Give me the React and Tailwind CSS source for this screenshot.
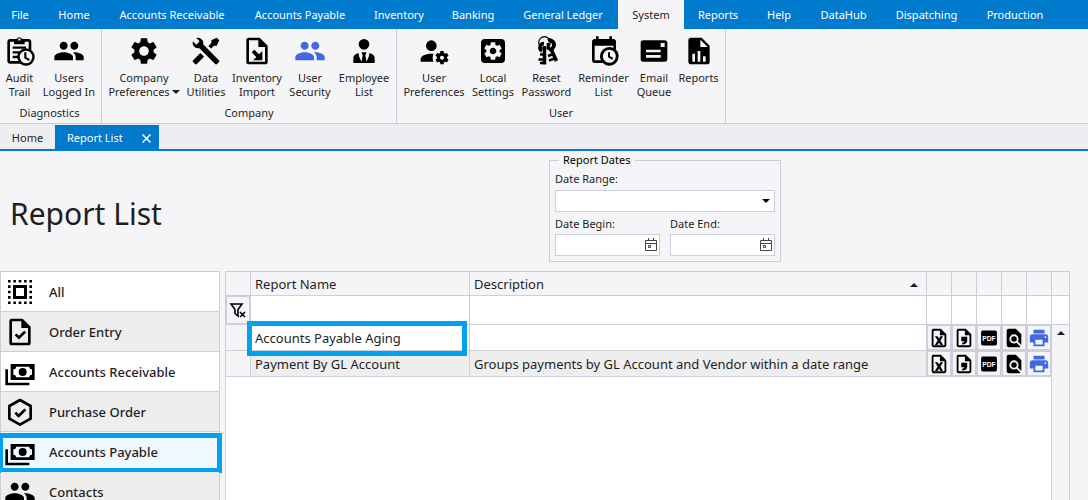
import { useState } from 'react'
import { MdGroup, MdSettings } from 'react-icons/md'

// 24x24 glyph made of one filled path
function Glyph({ d, className = 'size-8' }) {
  return (
    <svg viewBox="0 0 24 24" className={className} fill="currentColor" fillRule="evenodd" aria-hidden="true">
      <path d={d} />
    </svg>
  )
}

const paths = {
  tools: 'M21.71 20.29L20.29 21.71A1 1 0 0 1 18.88 21.71L7 9.85A3.81 3.81 0 0 1 6 10A4 4 0 0 1 2.22 4.7L4.76 7.24L5.29 6.71L6.71 5.29L7.24 4.76L4.7 2.22A4 4 0 0 1 10 6A3.81 3.81 0 0 1 9.85 7L21.71 18.88A1 1 0 0 1 21.71 20.29M2.29 18.88A1 1 0 0 0 2.29 20.29L3.71 21.71A1 1 0 0 0 5.12 21.71L10.59 16.25L7.76 13.42M20 2L16 4V6L13.83 8.17L15.83 10.17L18 8H20L22 4Z',
  tie: 'M12 3A4 4 0 0 1 16 7A4 4 0 0 1 12 11A4 4 0 0 1 8 7A4 4 0 0 1 12 3M16 13.54C16 14.6 15.72 17.07 13.81 19.83L13 15L13.94 13.12C13.32 13.05 12.67 13 12 13S10.68 13.05 10.06 13.12L11 15L10.19 19.83C8.28 17.07 8 14.6 8 13.54C5.61 14.24 4 15.5 4 17V21H20V17C20 15.5 18.4 14.24 16 13.54Z',
  userCog: 'M10 4A4 4 0 0 0 6 8A4 4 0 0 0 10 12A4 4 0 0 0 14 8A4 4 0 0 0 10 4M17 12C16.87 12 16.76 12.09 16.74 12.21L16.55 13.53C16.25 13.66 15.96 13.82 15.7 14L14.46 13.5C14.35 13.5 14.22 13.5 14.15 13.63L13.15 15.36C13.09 15.47 13.11 15.6 13.21 15.68L14.27 16.5C14.25 16.67 14.24 16.83 14.24 17C14.24 17.17 14.25 17.33 14.27 17.5L13.21 18.32C13.12 18.4 13.09 18.53 13.15 18.64L14.15 20.37C14.21 20.5 14.34 20.5 14.46 20.5L15.7 20C15.96 20.18 16.24 20.35 16.55 20.47L16.74 21.79C16.76 21.91 16.86 22 17 22H19C19.11 22 19.22 21.91 19.24 21.79L19.43 20.47C19.73 20.34 20 20.18 20.27 20L21.5 20.5C21.63 20.5 21.76 20.5 21.83 20.37L22.83 18.64C22.89 18.53 22.86 18.4 22.77 18.32L21.7 17.5C21.72 17.33 21.74 17.17 21.74 17C21.74 16.83 21.73 16.67 21.7 16.5L22.76 15.68C22.85 15.6 22.88 15.47 22.82 15.36L21.82 13.63C21.76 13.5 21.63 13.5 21.5 13.5L20.27 14C20 13.82 19.73 13.65 19.42 13.53L19.23 12.21C19.22 12.09 19.11 12 19 12H17M10 14C5.58 14 2 15.79 2 18V20H11.68A7 7 0 0 1 11 17A7 7 0 0 1 11.64 14.09C11.11 14.03 10.56 14 10 14M18 15.5C18.83 15.5 19.5 16.17 19.5 17C19.5 17.83 18.83 18.5 18 18.5C17.16 18.5 16.5 17.83 16.5 17C16.5 16.17 17.17 15.5 18 15.5Z',
  calendarClock: 'M15 13H16.5V15.82L18.94 17.23L18.19 18.53L15 16.69V13M19 8H5V19H9.67C9.24 18.09 9 17.07 9 16A7 7 0 0 1 16 9C17.07 9 18.09 9.24 19 9.67V8M5 21C3.89 21 3 20.1 3 19V5C3 3.89 3.89 3 5 3H6V1H8V3H16V1H18V3H19A2 2 0 0 1 21 5V11.1C22.24 12.36 23 14.09 23 16A7 7 0 0 1 16 23C14.09 23 12.36 22.24 11.1 21H5M16 11.15A4.85 4.85 0 0 0 11.15 16C11.15 18.68 13.32 20.85 16 20.85A4.85 4.85 0 0 0 20.85 16C20.85 13.32 18.68 11.15 16 11.15Z',
  emailQueue: 'M4 4H20A2 2 0 0 1 22 6V18A2 2 0 0 1 20 20H4A2 2 0 0 1 2 18V6A2 2 0 0 1 4 4M17 6V9H20V6H17M6 11V13H17V11H6M6 15V17H17V15H6Z',
  fileChart: 'M13 9H18.5L13 3.5V9M6 2H14L20 8V20A2 2 0 0 1 18 22H6C4.89 22 4 21.1 4 20V4C4 2.89 4.89 2 6 2M7 20H9V14H7V20M11 20H13V12H11V20M15 20H17V16H15V20Z',
  fileImport: 'M6 2H14L20 8V20A2 2 0 0 1 18 22H6A2 2 0 0 1 4 20V4A2 2 0 0 1 6 2M6 4V20H18V9H13V4H6M8 13L10 11L13.5 14.5L16 12V19H9L11.5 16.5L8 13Z',
  cash: 'M5 6H23V18H5V6M14 9A3 3 0 0 1 17 12A3 3 0 0 1 14 15A3 3 0 0 1 11 12A3 3 0 0 1 14 9M9 8A2 2 0 0 1 7 10V14A2 2 0 0 1 9 16H19A2 2 0 0 1 21 14V10A2 2 0 0 1 19 8H9M1 10H3V20H19V22H1V10Z',
  fileCheck: 'M6 2H14L20 8V20A2 2 0 0 1 18 22H6A2 2 0 0 1 4 20V4A2 2 0 0 1 6 2M6 4V20H18V9H13V4H6M8 14.5L9.4 13.1L11.2 14.9L15.2 11L16.6 12.4L11.2 17.7Z',
  fileExcel: 'M6 2H14L20 8V20A2 2 0 0 1 18 22H6A2 2 0 0 1 4 20V4A2 2 0 0 1 6 2M6 4V20H18V9H13V4H6M7.5 10H10.5L12 12.6L13.5 10H16.5L13.5 14.8L16.5 19.5H13.5L12 17L10.5 19.5H7.5L10.5 14.8Z',
  fileComma: 'M6 2H14L20 8V20A2 2 0 0 1 18 22H6A2 2 0 0 1 4 20V4A2 2 0 0 1 6 2M6 4V20H18V9H13V4H6M9 10.500H15.500V15C15.500 17.500 13.500 19.200 10 19.200V17.200C11.500 17 12.200 16.500 12.400 15.500H9Z',
  fileSearch: 'M14 2H6A2 2 0 0 0 4 4V20A2 2 0 0 0 6 22H18C18.4 22 18.8 21.9 19.1 21.6L14.8 17.3C14 17.8 13.1 18 12 18A5 5 0 1 1 17 13C17 14 16.7 15 16.2 15.8L20 19.6V8M12 10A3 3 0 1 0 12 16A3 3 0 0 0 12 10Z',
  printer: 'M18 3H6V7H18M19 12A1 1 0 0 1 18 11A1 1 0 0 1 19 10A1 1 0 0 1 20 11A1 1 0 0 1 19 12M16 19H8V14H16M19 8H5A3 3 0 0 0 2 11V17H6V21H18V17H22V11A3 3 0 0 0 19 8Z',
}

function AuditIcon() {
  return (
    <svg viewBox="0 0 24 24" className="size-8" fill="none" stroke="currentColor" strokeWidth="2" aria-hidden="true">
      <rect x="3.5" y="4" width="16" height="16.5" rx="1.2" />
      <path d="M7.5 3h2a2.200 2.200 0 0 1 4 0h2v4h-8z" fill="currentColor" stroke="none" />
      <circle cx="11.500" cy="3.300" r=".9" fill="#f5f5f7" stroke="none" />
      <path d="M6.500 9.500h10M6.500 13h5M6.500 16.500h4" strokeWidth="1.700" />
      <circle cx="16.500" cy="16.500" r="5.600" fill="#f5f5f7" strokeWidth="1.800" />
      <path d="M16 13v4l3 1.800" strokeWidth="1.600" />
    </svg>
  )
}

function AppCogIcon() {
  return (
    <span className="flex size-8 items-center justify-center">
      <span className="flex size-6 items-center justify-center rounded-sm bg-black text-[#f5f5f7]">
        <MdSettings className="size-[22px]" />
      </span>
    </span>
  )
}

function KeysIcon() {
  return (
    <svg viewBox="0 0 32 32" className="size-8" fill="none" stroke="currentColor" aria-hidden="true">
      <circle cx="13.500" cy="7.500" r="5.800" strokeWidth="1.200" />
      <path d="M13 8.500a4 4 0 0 0-2 7.500" strokeWidth="3.500" />
      <path d="M13.500 11v18.500" strokeWidth="3.500" />
      <path d="M7.500 24.500h5M9 28h3M9 19.500h3" strokeWidth="2.500" />
      <path d="M17 5.500a4.500 4.500 0 0 1 3 8.500" strokeWidth="4" />
      <path d="M17 8l.5 5.500 3 2" strokeWidth="3" />
      <path d="M20 14l5.500 12" strokeWidth="3.500" />
      <path d="M18 25.500l5.500-2M17 21l4-1.500" strokeWidth="2.500" />
    </svg>
  )
}

function SelectAllIcon() {
  return (
    <svg viewBox="0 0 32 32" className="size-8" fill="none" stroke="currentColor" aria-hidden="true">
      <path d="M4 5.300h24M4 26.700h24M5.300 4v24M26.700 4v24" strokeWidth="2.600" strokeDasharray="2.600 2.750" />
      <rect x="10.500" y="10.500" width="11" height="11" strokeWidth="3" />
    </svg>
  )
}

function HexCheckIcon() {
  return (
    <svg viewBox="0 0 24 24" className="size-8" fill="none" stroke="currentColor" strokeWidth="2" strokeLinejoin="round" aria-hidden="true">
      <path d="M12 3l8 4.500v9.500L12 21.500 4 17V7.500z" />
      <path d="M8.500 12.500l2.500 2.500 5-5" />
    </svg>
  )
}

function PdfIcon() {
  return (
    <svg viewBox="0 0 24 24" className="size-5" aria-hidden="true">
      <rect x="2.500" y="3" width="19" height="18" rx="2" />
      <text x="12" y="15" textAnchor="middle" fontSize="8" fontWeight="700" fill="#fff" fontFamily="Liberation Sans, sans-serif">PDF</text>
    </svg>
  )
}

function FilterIcon() {
  return (
    <svg viewBox="0 0 20 20" className="size-5" fill="none" stroke="currentColor" strokeWidth="1.600" aria-hidden="true">
      <path d="M3 4h11L10 9.500V16L7 13.500v-4z" />
      <path d="M12 12l5 5M17 12l-5 5" />
    </svg>
  )
}

function CalendarIcon() {
  return (
    <svg viewBox="0 0 14 14" className="size-3.5" fill="none" stroke="#444" strokeWidth="1" aria-hidden="true">
      <path d="M1.500 2.500h11v10h-11zM1.500 5.500h11M4.500 0v3M9.500 0v3M4.500 7.500h2v2h-2z" />
    </svg>
  )
}

function Caret({ up }) {
  return (
    <svg viewBox="0 0 8 4" className="h-1 w-2 shrink-0" fill="currentColor" aria-hidden="true">
      <path d={up ? 'M0 4L4 0L8 4Z' : 'M0 0L4 4L8 0Z'} />
    </svg>
  )
}

const menu = [
  { label: 'File', width: 'w-11 pr-1' },
  { label: 'Home', width: 'w-[60px]' },
  { label: 'Accounts Receivable', width: 'w-[136px]' },
  { label: 'Accounts Payable', width: 'w-[120px]' },
  { label: 'Inventory', width: 'w-[78px]' },
  { label: 'Banking', width: 'w-[70px]' },
  { label: 'General Ledger', width: 'w-[110px]' },
  { label: 'System', width: 'w-[66px]' },
  { label: 'Reports', width: 'w-[68px]' },
  { label: 'Help', width: 'w-[54px]' },
  { label: 'DataHub', width: 'w-[75px]' },
  { label: 'Dispatching', width: 'w-[91px]' },
  { label: 'Production', width: 'w-[86px]' },
]

const ribbon = [
  {
    label: 'Diagnostics',
    className: 'w-[102px] pr-0.5',
    items: [
      { lines: ['Audit', 'Trail'], icon: <AuditIcon />, width: 'w-[39px]' },
      { lines: ['Users', 'Logged In'], icon: <MdGroup className="size-8" />, width: 'w-[60px]' },
    ],
  },
  {
    label: 'Company',
    className: 'w-[295px]',
    items: [
      { lines: ['Company', 'Preferences'], icon: <MdSettings className="size-8" />, width: 'w-[78px]', menu: true },
      { lines: ['Data', 'Utilities'], icon: <Glyph d={paths.tools} />, width: 'w-[46px]' },
      { lines: ['Inventory', 'Import'], icon: <Glyph d={paths.fileImport} />, width: 'w-[56px]' },
      { lines: ['User', 'Security'], icon: <MdGroup className="size-8 text-[#4169e1]" />, width: 'w-[50px]' },
      { lines: ['Employee', 'List'], icon: <Glyph d={paths.tie} />, width: 'w-[58px]' },
    ],
  },
  {
    label: 'User',
    className: 'w-[329px]',
    items: [
      { lines: ['User', 'Preferences'], icon: <Glyph d={paths.userCog} />, width: 'w-[67px]' },
      { lines: ['Local', 'Settings'], icon: <AppCogIcon />, width: 'w-[51px]' },
      { lines: ['Reset', 'Password'], icon: <KeysIcon />, width: 'w-[56px]' },
      { lines: ['Reminder', 'List'], icon: <Glyph d={paths.calendarClock} />, width: 'w-[58px]' },
      { lines: ['Email', 'Queue'], icon: <Glyph d={paths.emailQueue} />, width: 'w-[43px]' },
      { lines: ['Reports'], icon: <Glyph d={paths.fileChart} />, width: 'w-[46px]' },
    ],
  },
]

const categories = [
  { label: 'All', icon: <SelectAllIcon /> },
  { label: 'Order Entry', icon: <Glyph d={paths.fileCheck} /> },
  { label: 'Accounts Receivable', icon: <Glyph d={paths.cash} /> },
  { label: 'Purchase Order', icon: <HexCheckIcon /> },
  { label: 'Accounts Payable', icon: <Glyph d={paths.cash} /> },
  { label: 'Contacts', icon: <MdGroup className="size-8" /> },
]

const reports = [
  { name: 'Accounts Payable Aging', description: '' },
  { name: 'Payment By GL Account', description: 'Groups payments by GL Account and Vendor within a date range' },
]

const actions = [
  { label: 'Excel', icon: <Glyph d={paths.fileExcel} className="size-[22px]" /> },
  { label: 'CSV', icon: <Glyph d={paths.fileComma} className="size-[22px]" /> },
  { label: 'PDF', icon: <PdfIcon /> },
  { label: 'Preview', icon: <Glyph d={paths.fileSearch} className="size-[22px]" /> },
  { label: 'Print', icon: <Glyph d={paths.printer} className="size-[22px] text-[#4169e1]" /> },
]

function MenuBar({ active, onSelect }) {
  return (
    <nav className="flex h-[29px] shrink-0 bg-[#007acc] text-white">
      {menu.map(item => (
        <button
          key={item.label}
          onClick={() => onSelect(item.label)}
          className={`${item.width} shrink-0 whitespace-nowrap pt-0.5 text-center ${active === item.label ? 'bg-[#f5f5f7] text-[#1e1e1e]' : ''}`}
        >
          {item.label}
        </button>
      ))}
    </nav>
  )
}

function Ribbon() {
  return (
    <div className="flex shrink-0 border-b border-[#cccedb]">
      {ribbon.map(group => (
        <section key={group.label} className={`${group.className} flex shrink-0 flex-col border-r border-[#cccedb] pt-1.5`}>
          <div className="flex h-[68px] justify-center">
            {group.items.map(item => (
              <button key={item.lines.join(' ')} className={`${item.width} flex shrink-0 flex-col items-center`}>
                <span className="text-black">{item.icon}</span>
                <span className="mt-1 flex flex-col items-center leading-[14px] whitespace-nowrap">
                  <span>{item.lines[0]}</span>
                  <span className="flex items-center gap-0.5">
                    {item.lines[1]}
                    {item.menu && <Caret />}
                  </span>
                </span>
              </button>
            ))}
          </div>
          <div className="text-center leading-5">{group.label}</div>
        </section>
      ))}
    </div>
  )
}

function DocumentTabs() {
  return (
    <div className="flex h-[27px] shrink-0 items-end border-b-2 border-[#007acc] bg-[#eeeef2]">
      <button className="h-6 w-[55px] pt-0.5 text-center">Home</button>
      <div className="flex h-6 w-[104px] items-center justify-between bg-[#007acc] pt-0.5 pr-2 pl-3 text-white">
        <span className="whitespace-nowrap">Report List</span>
        <button aria-label="Close tab">
          <svg viewBox="0 0 9 9" className="size-[9px]" stroke="currentColor" strokeWidth="1.500" aria-hidden="true">
            <path d="M.5 .5l8 8M8.500 .5l-8 8" />
          </svg>
        </button>
      </div>
    </div>
  )
}

function DateField({ id, label }) {
  return (
    <div className="min-w-0 flex-1">
      <label htmlFor={id} className="block leading-5">{label}</label>
      <div className="flex h-[22px] items-center border border-[#cccedb] bg-white pr-px">
        <input id={id} type="text" className="w-0 flex-1 px-1 outline-none" />
        <button aria-label={`Pick ${label}`}><CalendarIcon /></button>
      </div>
    </div>
  )
}

function ReportDates() {
  return (
    <fieldset className="w-[232px] shrink-0 self-start border border-[#cccedb] px-[5px] pb-[5px]">
      <legend className="ml-1 px-1 leading-4 text-black">Report Dates</legend>
      <label htmlFor="date-range" className="block leading-[22px]">Date Range:</label>
      <div className="relative">
        <select id="date-range" className="block h-[22px] w-full appearance-none border border-[#cccedb] bg-white px-1 outline-none">
          <option></option>
        </select>
        <span className="pointer-events-none absolute inset-y-0 right-[5px] flex items-center text-black"><Caret /></span>
      </div>
      <div className="mt-0.5 flex gap-2.5">
        <DateField id="date-begin" label="Date Begin:" />
        <DateField id="date-end" label="Date End:" />
      </div>
    </fieldset>
  )
}

function Sidebar({ selected, onSelect }) {
  return (
    <ul className="w-[220px] shrink-0 border border-[#cccedb]">
      {categories.map((category, i) => {
        const isSelected = category.label === selected
        const background = isSelected ? 'bg-[#f0f8ff]' : i % 2 ? 'bg-[#eeeeee]' : 'bg-white'
        return (
          <li key={category.label} className="relative border-b border-[#cccedb]">
            <button
              onClick={() => onSelect(category.label)}
              className={`${background} flex h-[39px] w-full items-center gap-[13px] pt-px pl-[3px] text-[13px] font-medium text-[#1e1e1e]`}
            >
              <span className="text-black">{category.icon}</span>
              <span className="pt-px">{category.label}</span>
            </button>
            {isSelected && <span className="pointer-events-none absolute -inset-x-[3px] top-px -bottom-0.5 border-[5px] border-[#00a2ed]" />}
          </li>
        )
      })}
    </ul>
  )
}

function ReportGrid() {
  const cell = 'border border-[#cccedb] p-0'
  const textCell = 'border border-[#cccedb] px-1 pt-0.5 pb-0'
  return (
    <div className="flex min-w-0 flex-1 flex-col">
      <table className="w-full table-fixed border-collapse text-left text-[13px]">
        <colgroup>
          <col className="w-[25px]" />
          <col className="w-[219px]" />
          <col />
          {actions.map(a => <col key={a.label} className="w-[25px]" />)}
          <col className="w-[18px]" />
        </colgroup>
        <thead>
          <tr className="h-6">
            <th className={cell}></th>
            <th className={`${textCell} font-normal`}>Report Name</th>
            <th className={`${textCell} font-normal`}>
              <div className="flex items-center justify-between pr-1">
                Description
                <Caret up />
              </div>
            </th>
            {actions.map(a => <th key={a.label} className={cell}></th>)}
            <th className={cell}></th>
          </tr>
          <tr className="h-[29px] bg-white">
            <td className={`${cell} bg-[#f5f5f7]`}>
              <button aria-label="Clear filter" className="flex h-7 w-full items-center justify-center border border-[#cccedb] text-black"><FilterIcon /></button>
            </td>
            <td className={cell}><input aria-label="Filter report name" className="block h-7 w-full px-1 outline-none" /></td>
            <td className={cell}><input aria-label="Filter description" className="block h-7 w-full px-1 outline-none" /></td>
            {actions.map(a => <td key={a.label} className={cell}></td>)}
            <td className={cell}></td>
          </tr>
        </thead>
        <tbody>
          {reports.map((report, i) => (
            <tr key={report.name} className={`h-[26px] ${i % 2 ? 'bg-[#eeeeee]' : 'bg-white'}`}>
              <td className={`${cell} bg-[#f5f5f7]`}></td>
              <td className={`${textCell} relative`}>
                {report.name}
                {i === 0 && <span className="pointer-events-none absolute -top-1 right-0.5 -bottom-1.5 -left-1 border-[5px] border-[#00a2ed]" />}
              </td>
              <td className={`${textCell} truncate`}>{report.description}</td>
              {actions.map(a => (
                <td key={a.label} className={`${cell} bg-[#f5f5f7]`}>
                  <button aria-label={`${a.label} ${report.name}`} className="flex h-[25px] w-full items-center justify-center border border-[#cccedb] text-black">
                    {a.icon}
                  </button>
                </td>
              ))}
              {i === 0 && (
                <td rowSpan={reports.length} className="border-x border-t border-[#cccedb] bg-[#f5f5f7] p-0 align-top">
                  <button aria-label="Scroll up" className="flex h-4 w-full items-center justify-center"><Caret up /></button>
                </td>
              )}
            </tr>
          ))}
        </tbody>
      </table>
      <div className="flex flex-1 border-x border-[#cccedb]">
        <div className="flex-1 border-r border-[#cccedb] bg-white" />
        <div className="w-[17px]" />
      </div>
    </div>
  )
}

export default function App() {
  const [activeMenu, setActiveMenu] = useState('System')
  const [category, setCategory] = useState('Accounts Payable')

  return (
    <div className="flex h-screen flex-col overflow-hidden bg-[#f5f5f7] font-['Noto_Sans','Open_Sans',sans-serif] text-[11px] text-[#1e1e1e]">
      <MenuBar active={activeMenu} onSelect={setActiveMenu} />
      <Ribbon />
      <DocumentTabs />
      <main className="flex min-h-0 flex-1 flex-col">
        <header className="flex h-30 shrink-0 pt-px">
          <h1 className="w-[549px] pt-[42px] pl-2.5 text-[30px] leading-10">Report List</h1>
          <ReportDates />
        </header>
        <div className="flex min-h-0 flex-1 gap-[5px] pr-[18px]">
          <Sidebar selected={category} onSelect={setCategory} />
          <ReportGrid />
        </div>
      </main>
    </div>
  )
}
